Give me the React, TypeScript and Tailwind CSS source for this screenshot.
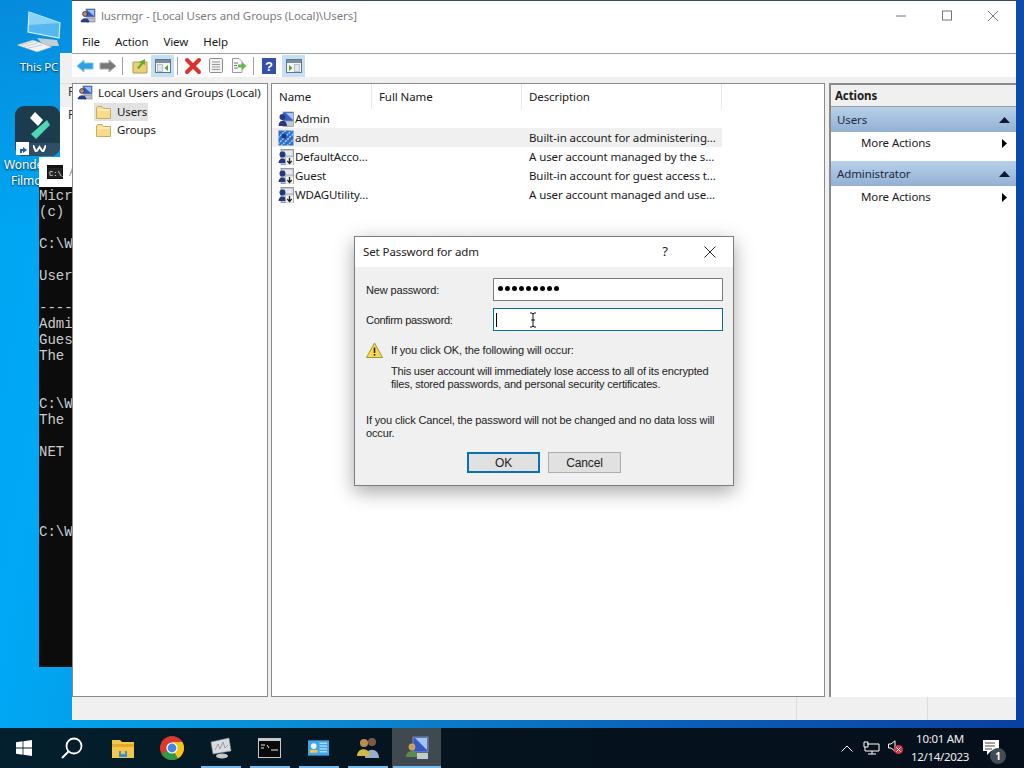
import React from "react";

const ui = "font-['Noto_Sans',sans-serif] tracking-[-0.1px]";
const dlg = "font-['Liberation_Sans',sans-serif]";

function FolderIcon() {
  return (
    <svg width="15" height="13" viewBox="0 0 15 13" className="shrink-0">
      <path d="M0.5 1.5 L0.5 12.5 L14.5 12.5 L14.5 2.5 L7.5 2.5 L6 0.5 L1.5 0.5 Z" fill="#f8dc8c" stroke="#c9ad62" strokeWidth="1" />
      <path d="M1.5 4 L13.5 4" stroke="#fdf0c4" strokeWidth="1.5" />
    </svg>
  );
}

function MmcIcon({ size = 16 }: { size?: number }) {
  return (
    <svg width={size} height={size} viewBox="0 0 16 16" className="shrink-0">
      <rect x="6" y="1" width="9" height="8" fill="#3558c4" stroke="#7f8a9c" strokeWidth="0.8" />
      <path d="M7 2 L14 2 L14 8 Z" fill="#9dc0ee" />
      <rect x="7" y="10" width="8" height="4" fill="#b9bec8" stroke="#717784" strokeWidth="0.6" />
      <circle cx="5" cy="6" r="2.4" fill="#c49058" stroke="#1e2b55" strokeWidth="0.8" />
      <path d="M1 14 C1 9.5 9 9.5 9 14 Z" fill="#1f3f9f" stroke="#1d2750" strokeWidth="0.6" />
    </svg>
  );
}

function UserIcon({ variant }: { variant: "admin" | "sel" | "down" }) {
  if (variant === "sel") {
    return (
      <svg width="16" height="16" viewBox="0 0 16 16" className="shrink-0">
        <rect x="0.5" y="0.5" width="15" height="15" fill="#2f6fc8" />
        <path d="M0 8 L8 0 M0 14 L14 0 M3 16 L16 3 M9 16 L16 9" stroke="#a9cdf0" strokeWidth="1.4" strokeDasharray="2 1" />
        <circle cx="6" cy="6" r="2.5" fill="#123a92" />
      </svg>
    );
  }
  if (variant === "admin") {
    return (
      <svg width="16" height="16" viewBox="0 0 16 16" className="shrink-0">
        <rect x="5" y="1" width="10.5" height="9" fill="#3a62cc" stroke="#8692a5" strokeWidth="0.7" />
        <path d="M8 2 L15 2 L15 9 Z" fill="#a9c8f0" />
        <rect x="5" y="10" width="10.5" height="5.5" fill="#c5c9d0" stroke="#7f8490" strokeWidth="0.6" />
        <circle cx="4.5" cy="6" r="3" fill="#253a78" />
        <path d="M0.5 15 C0.5 8 9 8 9 15 Z" fill="#23397f" />
      </svg>
    );
  }
  return (
    <svg width="16" height="16" viewBox="0 0 16 16" className="shrink-0">
      <rect x="3" y="0.5" width="12.5" height="15" fill="#c4c9d2" stroke="#767c88" strokeWidth="0.7" />
      <path d="M7 2 L14.5 2 L14.5 6 L7 6 Z" fill="#e6e8ec" />
      <circle cx="4.5" cy="5.5" r="3" fill="#24387c" />
      <path d="M0.5 14 C0.5 8 8.5 8 8.5 14 Z" fill="#24387c" />
      <rect x="7.5" y="8" width="8" height="8" fill="#f4f4f4" stroke="#9aa0aa" strokeWidth="0.5" />
      <path d="M11.5 9 L11.5 14 M9.3 12 L11.5 14.5 L13.7 12" stroke="#222" strokeWidth="1.3" fill="none" />
    </svg>
  );
}

function ToolBtn({ children, active }: { children: React.ReactNode; active?: boolean }) {
  return (
    <div className={`w-[23px] h-[22px] flex items-center justify-center shrink-0 ${active ? "bg-[#c5dff3]" : ""}`}>
      {children}
    </div>
  );
}

function Sep({ after = 3 }: { after?: number }) {
  return <div className={`w-px h-[18px] bg-[#a0a0a0] ml-[3px] shrink-0 ${after === 5 ? "mr-[5px]" : "mr-[3px]"}`} />;
}

function Toolbar() {
  return (
    <div className="h-[23px] bg-white flex items-center pl-[1px] border-t border-[#a0a0a0] box-content">
      <ToolBtn>
        <svg width="18" height="14" viewBox="0 0 18 14">
          <path d="M1 7 L8 1 L8 4 L17 4 L17 10 L8 10 L8 13 Z" fill="#2f9fe0" stroke="#7cc5ee" strokeWidth="1" />
        </svg>
      </ToolBtn>
      <ToolBtn>
        <svg width="18" height="14" viewBox="0 0 18 14">
          <path d="M17 7 L10 1 L10 4 L1 4 L1 10 L10 10 L10 13 Z" fill="#777" stroke="#aaa" strokeWidth="1" />
        </svg>
      </ToolBtn>
      <Sep after={5} />
      <ToolBtn>
        <svg width="16" height="16" viewBox="0 0 16 16">
          <path d="M1 4 L1 15 L15 15 L15 4 Z" fill="#e8cf7a" stroke="#b59a4a" />
          <path d="M5 10 L9 5 L7 4 L13 1 L13 7 L11 6 L7 11 Z" fill="#6aa82f" />
        </svg>
      </ToolBtn>
      <ToolBtn active>
        <svg width="16" height="14" viewBox="0 0 16 14">
          <rect x="0.5" y="0.5" width="15" height="13" fill="#f4f4f4" stroke="#64748b" />
          <rect x="1" y="1" width="14" height="3" fill="#7b8ba0" />
          <rect x="2.5" y="5.5" width="5" height="7" fill="#dfe6ec" stroke="#98a4b0" strokeWidth="0.6" />
          <path d="M13 6 L9.5 9 L13 12 Z" fill="#5e9a3c" />
        </svg>
      </ToolBtn>
      <Sep />
      <ToolBtn>
        <svg width="18" height="18" viewBox="0 0 18 18">
          <path d="M3 3 L15 15 M15 3 L3 15" stroke="#e0302c" strokeWidth="4" strokeLinecap="round" />
        </svg>
      </ToolBtn>
      <ToolBtn>
        <svg width="14" height="15" viewBox="0 0 14 15">
          <rect x="0.5" y="0.5" width="13" height="14" rx="1" fill="#f2f2f2" stroke="#8d8d8d" />
          <path d="M3 4 H11 M3 6.5 H11 M3 9 H11 M3 11.5 H11" stroke="#9a9a9a" />
        </svg>
      </ToolBtn>
      <ToolBtn>
        <svg width="16" height="15" viewBox="0 0 16 15">
          <path d="M1.5 0.5 H8 L11 3.5 V14.5 H1.5 Z" fill="#fafafa" stroke="#9a9a9a" />
          <path d="M3 5 H7 M3 7.5 H6 M3 10 H7" stroke="#777" />
          <path d="M7 6.5 H11 V4 L15.5 8 L11 12 V9.5 H7 Z" fill="#62b848" />
        </svg>
      </ToolBtn>
      <Sep />
      <ToolBtn>
        <svg width="14" height="16" viewBox="0 0 14 16">
          <rect width="14" height="16" fill="#3550ac" />
          <text x="7" y="13" textAnchor="middle" fontSize="13" fontWeight="700" fill="#fff" fontFamily="Liberation Sans">?</text>
        </svg>
      </ToolBtn>
      <div className="ml-[2px]">
        <ToolBtn active>
          <svg width="16" height="14" viewBox="0 0 16 14">
            <rect x="0.5" y="0.5" width="15" height="13" fill="#f4f4f4" stroke="#64748b" />
            <rect x="1" y="1" width="14" height="3" fill="#7b8ba0" />
            <rect x="8.5" y="5.5" width="5" height="7" fill="#dfe6ec" stroke="#98a4b0" strokeWidth="0.6" />
            <path d="M3 6 L6.5 9 L3 12 Z" fill="#5e9a3c" />
          </svg>
        </ToolBtn>
      </div>
    </div>
  );
}

function TreePane() {
  return (
    <div className={`w-[196px] shrink-0 bg-white border border-[#8a8a8a] text-[11.5px] leading-[18px] text-[#1a1a1a] ${ui}`}>
      <div className="flex items-center gap-[3px] pl-[4px] h-[18px] whitespace-nowrap">
        <MmcIcon />
        <span className="ml-[2px]">Local Users and Groups (Local)</span>
      </div>
      <div className="flex flex-col pl-[21px] mt-[1px]">
        <div className="flex items-center gap-[6px] w-[54px] h-[18px] bg-[#e2e2e2] pl-[2px]">
          <FolderIcon />
          <span>Users</span>
        </div>
        <div className="flex items-center gap-[6px] h-[18px] pl-[2px]">
          <FolderIcon />
          <span>Groups</span>
        </div>
      </div>
    </div>
  );
}

const users: { n: string; d: string; v: "admin" | "sel" | "down"; s?: boolean }[] = [
  { n: "Admin", d: "", v: "admin" },
  { n: "adm", d: "Built-in account for administering...", v: "sel", s: true },
  { n: "DefaultAcco...", d: "A user account managed by the s...", v: "down" },
  { n: "Guest", d: "Built-in account for guest access t...", v: "down" },
  { n: "WDAGUtility...", d: "A user account managed and use...", v: "down" },
];

function ListPane() {
  return (
    <div className={`flex-1 mr-[1px] bg-white border border-[#8a8a8a] text-[11.5px] text-[#1a1a1a] ${ui}`}>
      <div className="flex h-[25px] items-center">
        <div className="w-[100px] pl-[7px] h-full flex items-center border-r border-[#e8e8e8]">Name</div>
        <div className="w-[150px] pl-[7px] h-full flex items-center border-r border-[#e8e8e8]">Full Name</div>
        <div className="w-[200px] pl-[7px] h-full flex items-center border-r border-[#e8e8e8]">Description</div>
      </div>
      <div className="flex flex-col">
        {users.map((u) => (
          <div key={u.n} className={`flex items-center h-[19px] w-[450px] ${u.s ? "bg-[#f0f0f0]" : ""}`}>
            <div className="w-[251px] shrink-0 pl-[6px] flex items-center gap-[1px] whitespace-nowrap">
              <UserIcon variant={u.v} />
              <span>{u.n}</span>
            </div>
            <div className="pl-[6px] whitespace-nowrap">{u.d}</div>
          </div>
        ))}
      </div>
    </div>
  );
}

function ActionGroup({ title }: { title: string }) {
  return (
    <div>
      <div className="h-[25px] bg-[linear-gradient(#b7d1ea,#94b0d2)] flex items-center justify-between pl-[6px] pr-[6px] text-[#1c2a44]">
        <span>{title}</span>
        <svg width="11" height="6" viewBox="0 0 11 6">
          <path d="M0 6 L5.5 0 L11 6 Z" fill="#0b1b33" />
        </svg>
      </div>
      <div className="h-[29px] flex items-start pt-[2px] justify-between pl-[30px] pr-[9px] bg-white">
        <span>More Actions</span>
        <svg width="5" height="9" viewBox="0 0 5 9" className="mt-[5px]">
          <path d="M0 0 L5 4.5 L0 9 Z" fill="#000" />
        </svg>
      </div>
    </div>
  );
}

function ActionsPane() {
  return (
    <div className={`w-[187px] shrink-0 bg-white border-l-2 border-t-2 border-[#8a8a8a] text-[11.5px] text-[#1a1a1a] ${ui}`}>
      <div className="h-[22px] bg-[#f0f0f0] border-b border-[#9a9a9a] flex items-center pl-[4px] font-bold">Actions</div>
      <ActionGroup title="Users" />
      <ActionGroup title="Administrator" />
    </div>
  );
}

function Dialog() {
  return (
    <div className={`absolute left-[354px] top-[236px] w-[380px] h-[250px] border border-[#7d7d7d] bg-[#f0f0f0] shadow-[0_6px_18px_rgba(0,0,0,0.35)] flex flex-col text-[11px] tracking-[-0.15px] text-[#222] ${dlg}`}>
      <div className={`h-[30px] bg-white flex items-center pl-[8px] text-[11.5px] ${ui}`}>
        <span className="flex-1">Set Password for adm</span>
        <span className="w-[14px] text-center text-[13px] mr-[32px]">?</span>
        <svg width="12" height="12" viewBox="0 0 12 12" className="mr-[17px]">
          <path d="M0.5 0.5 L11.5 11.5 M11.5 0.5 L0.5 11.5" stroke="#222" strokeWidth="1" />
        </svg>
      </div>
      <div className="flex-1 flex flex-col pl-[11px] pr-[10px] pt-[11px]">
        <div className="flex items-center h-[23px]">
          <span className="w-[127px] pt-[2px]">New password:</span>
          <div className="w-[230px] h-[23px] bg-white border border-[#7a7a7a] flex items-center pl-[4px]">
            <span className="flex gap-[2px] -mt-[2px]">
              {[0, 1, 2, 3, 4, 5, 6, 7, 8].map((i) => (
                <span key={i} className="w-[5px] h-[5px] rounded-full bg-black" />
              ))}
            </span>
          </div>
        </div>
        <div className="flex items-center h-[23px] mt-[7px]">
          <span className="w-[127px] pt-[2px] tracking-[-0.3px]">Confirm password:</span>
          <div className="relative w-[230px] h-[23px] bg-white border border-[#0a6ba0] flex items-center pl-[2px]">
            <span className="w-px h-[14px] bg-black" />
            <svg width="8" height="16" viewBox="0 0 8 16" className="absolute left-[35px] top-[3px]">
              <path d="M1 1 H3 L4 2 L5 1 H7 M4 2 V14 M1 15 H3 L4 14 L5 15 H7 M2 8 H6" stroke="#111" strokeWidth="1" fill="none" />
            </svg>
          </div>
        </div>
        <div className="flex mt-[11px]">
          <svg width="17" height="16" viewBox="0 0 17 16" className="shrink-0 mr-[8px]">
            <path d="M8.5 1 L16.5 15.5 L0.5 15.5 Z" fill="#f7d94c" stroke="#a59340" strokeWidth="1" />
            <path d="M8.5 5.5 V11" stroke="#222" strokeWidth="1.6" />
            <rect x="7.7" y="12" width="1.6" height="1.6" fill="#222" />
          </svg>
          <div className="flex flex-col">
            <span className="h-[14px] leading-[14px] mt-[1px]">If you click OK, the following will occur:</span>
            <span className="mt-[8px] leading-[13px] w-[330px] tracking-[-0.2px]">
              This user account will immediately lose access to all of its encrypted files, stored passwords, and personal security certificates.
            </span>
          </div>
        </div>
        <div className="mt-[23px] leading-[13px] w-[355px]">
          If you click Cancel, the password will not be changed and no data loss will occur.
        </div>
        <div className="flex justify-center gap-[8px] mt-[12px] text-[12px] pr-[1px]">
          <div className="w-[73px] h-[21px] bg-[#e1e1e1] border-2 border-[#0a6fb5] flex items-center justify-center">OK</div>
          <div className="w-[73px] h-[21px] bg-[#e1e1e1] border border-[#adadad] flex items-center justify-center">Cancel</div>
        </div>
      </div>
    </div>
  );
}

function MainWindow() {
  return (
    <div className={`absolute left-[72px] top-0 w-[944px] h-[720px] bg-[#f0f0f0] flex flex-col border-t border-[#3a4a5a] ${ui}`}>
      <div className="h-[30px] bg-white flex items-center pl-[8px] text-[11.5px] text-[#7c7c7c] shrink-0">
        <MmcIcon />
        <span className="ml-[5px]">lusrmgr - [Local Users and Groups (Local)\Users]</span>
        <div className="ml-auto flex items-center">
          <svg width="46" height="12" viewBox="0 0 46 12"><path d="M18 6 H28" stroke="#777" /></svg>
          <svg width="46" height="12" viewBox="0 0 46 12"><rect x="18.5" y="1" width="9" height="9" fill="none" stroke="#777" /></svg>
          <svg width="46" height="12" viewBox="0 0 46 12"><path d="M18 1 L28 11 M28 1 L18 11" stroke="#777" /></svg>
        </div>
      </div>
      <div className="h-[22px] bg-white flex items-center gap-[15px] pl-[10px] text-[11.5px] text-[#1a1a1a] shrink-0">
        <span>File</span><span>Action</span><span>View</span><span>Help</span>
      </div>
      <Toolbar />
      <div className="flex-1 flex min-h-0 pt-[6px] gap-[3px]">
        <TreePane />
        <ListPane />
        <ActionsPane />
      </div>
      <div className="h-[23px] bg-[#f0f0f0] flex shrink-0">
        <div className="w-[725px] border-r border-[#dcdcdc]" />
        <div className="w-[131px] border-r border-[#dcdcdc]" />
      </div>
    </div>
  );
}

function Console() {
  const lines: [string, number][] = [
    ["Micr", 196], ["(c)", 212], ["C:\\W", 244], ["User", 276], ["----", 308], ["Admi", 324],
    ["Gues", 340], ["The", 356], ["C:\\W", 404], ["The", 420], ["NET", 452], ["C:\\W", 532],
  ];
  return (
    <>
      <div className="absolute left-[60px] top-[53px] w-[12px] h-[104px] bg-[#f0f0f0] text-[12px] text-[#333] overflow-hidden font-['Noto_Sans',sans-serif]">
        <div className="h-[31px] border-b border-[#ddd]" />
        <div className="pl-[8px] leading-[16px]">F</div>
        <div className="h-[7px]" />
        <div className="pl-[8px] leading-[16px] bg-white h-[60px]">P</div>
      </div>
      <div className="absolute left-[39px] top-[157px] w-[33px] h-[510px] bg-[#0c0c0c] overflow-hidden font-['Liberation_Mono',monospace] text-[14px] text-[#cccccc]">
        <div className="h-[30px] bg-white flex items-center pl-[8px] gap-[6px]">
          <svg width="16" height="14" viewBox="0 0 16 14" className="shrink-0">
            <rect width="16" height="14" fill="#111" />
            <rect x="1" y="3" width="14" height="10" fill="#222" />
            <text x="2" y="11" fontSize="7" fill="#fff" fontFamily="Liberation Mono">C:\_</text>
          </svg>
          <span className="text-[12px] text-[#999] font-['Noto_Sans',sans-serif]">A</span>
        </div>
        {lines.map(([t, y], i) => (
          <div key={i} className="absolute left-0 leading-[16px] whitespace-pre" style={{ top: y - 157 - 8 }}>{t}</div>
        ))}
      </div>
    </>
  );
}

function DesktopIcons() {
  return (
    <>
      <div className={`absolute left-[10px] top-[8px] w-[58px] flex flex-col items-center text-white text-[11.5px] [text-shadow:0_1px_2px_rgba(0,0,0,0.8)] ${ui}`}>
        <svg width="58" height="50" viewBox="0 0 58 50">
          <path d="M27 30 L47 32 L49 38 L34 38 Z" fill="#c4ccd4" />
          <path d="M19 4 L50 15 L49 30 L18 24 Z" fill="#55b8f0" stroke="#d6f0fc" strokeWidth="1.2" />
          <path d="M19 4 L50 15 L19 17 Z" fill="#8ad3f8" />
          <path d="M7 37 L23 32 L42 39 L27 44 Z" fill="#f0f4f7" stroke="#9aa7b0" strokeWidth="0.5" />
          <path d="M11 37 L24 33.5 M14 38.5 L28 35 M18 40 L32 37" stroke="#aab6bf" strokeWidth="0.6" />
        </svg>
        <span className="whitespace-nowrap">This PC</span>
      </div>
      <div className="absolute left-[15px] top-[106px] w-[45px] h-[50px] rounded-[9px] bg-[#1c3b4c] overflow-hidden flex items-start justify-center pt-[4px]">
        <svg width="26" height="32" viewBox="0 0 26 32">
          <path d="M10 2 L18 10 L13 16 L5 8 Z" fill="#ffffff" />
          <path d="M22 10 L25 15 L11 29 L6 24 Z" fill="#4fd6b4" />
        </svg>
        <div className="absolute left-0 bottom-0 w-full h-[13px] bg-[#2f4f66]" />
      </div>
      <div className="absolute left-[16px] top-[142px] w-[13px] h-[13px] bg-white flex items-center justify-center">
        <svg width="10" height="10" viewBox="0 0 10 10"><path d="M2 9 V5 H5 V3 L9 6 L5 9 V7 H4 V9 Z" fill="#1a5fb4" /></svg>
      </div>
      <svg width="13" height="7" viewBox="0 0 13 7" className="absolute left-[33px] top-[145px]">
        <path d="M0 0 L3 7 L6.5 2 L10 7 L13 0" stroke="#fff" strokeWidth="2" fill="none" />
      </svg>
      <div className={`absolute left-[4px] top-[157px] text-white text-[12px] leading-[16px] [text-shadow:0_1px_2px_rgba(0,0,0,0.8)] ${ui}`}>
        <div>Wonde</div>
        <div className="pl-[7px]">Filmo</div>
      </div>
    </>
  );
}

function TaskCell({ children, active }: { children: React.ReactNode; active?: boolean }) {
  return (
    <div className={`w-[49px] h-[40px] flex justify-center items-center ${active ? "bg-[#3e4a50]" : ""}`}>{children}</div>
  );
}

function Taskbar() {
  return (
    <div className={`absolute left-0 top-[728px] w-[1024px] h-[40px] bg-[linear-gradient(90deg,#04202e,#05141e_40%,#050f1c)] flex items-center text-white ${ui}`}>
      <div className="w-[48px] flex justify-center">
        <svg width="16" height="16" viewBox="0 0 16 16">
          <path d="M0 2.2 L6.6 1.3 V7.6 H0 Z M7.4 1.2 L16 0 V7.6 H7.4 Z M0 8.4 H6.6 V14.7 L0 13.8 Z M7.4 8.4 H16 V16 L7.4 14.8 Z" fill="#fff" />
        </svg>
      </div>
      <div className="w-[48px] flex justify-center">
        <svg width="22" height="22" viewBox="0 0 22 22">
          <circle cx="13" cy="9" r="7.5" fill="none" stroke="#fff" strokeWidth="1.8" />
          <path d="M7.5 14.5 L1 21" stroke="#fff" strokeWidth="2" />
        </svg>
      </div>
      <div className="flex ml-[2px]">
        <TaskCell>
          <svg width="22" height="19" viewBox="0 0 22 19">
            <path d="M0 1 H8 L10 3 H22 V19 H0 Z" fill="#f3c64c" />
            <rect x="0" y="5" width="22" height="3" fill="#e7a928" />
            <rect x="7" y="12" width="8" height="6" fill="#3f8fd0" />
            <rect x="9" y="12" width="4" height="3" fill="#f3c64c" />
          </svg>
        </TaskCell>
        <TaskCell>
          <svg width="24" height="24" viewBox="0 0 24 24">
            <circle cx="12" cy="12" r="12" fill="#d93a2f" />
            <path d="M12 12 L1.6 18 A12 12 0 0 0 18 22.4 Z" fill="#2f9a44" />
            <path d="M12 12 L18 22.4 A12 12 0 0 0 22.4 6 L12 6 Z" fill="#f5c518" />
            <circle cx="12" cy="12" r="5.6" fill="#fff" />
            <circle cx="12" cy="12" r="4.4" fill="#4286e8" />
          </svg>
        </TaskCell>
        <TaskCell>
          <svg width="24" height="22" viewBox="0 0 24 22">
            <path d="M2 5 L20 1 L22 14 L4 17 Z" fill="#d8dbdf" stroke="#8a9096" strokeWidth="0.6" />
            <path d="M6 13 L9 7 L11 12 L14 5 L16 11 L19 8" stroke="#8a9096" fill="none" strokeWidth="0.8" />
            <ellipse cx="13" cy="19" rx="6" ry="2.5" fill="#c5c9cd" />
          </svg>
        </TaskCell>
        <TaskCell>
          <svg width="23" height="20" viewBox="0 0 23 20">
            <rect x="0.5" y="0.5" width="22" height="19" fill="#0a0a0a" stroke="#c8c8c8" />
            <rect x="1" y="1" width="21" height="2" fill="#c8c8c8" />
            <path d="M3 7 H7 M3 10 H6 M9 7 L11 10 M13 12 H20" stroke="#e8e8e8" />
          </svg>
        </TaskCell>
        <TaskCell>
          <svg width="21" height="16" viewBox="0 0 22 16">
            <rect width="22" height="16" fill="#3fa6e8" />
            <circle cx="6" cy="6" r="3" fill="#f4f4f4" />
            <rect x="2" y="10" width="8" height="3" fill="#f3c64c" />
            <path d="M12 3 H20 M12 6 H20 M12 9 H20 M12 12 H20" stroke="#e6f2fb" />
          </svg>
        </TaskCell>
        <TaskCell>
          <svg width="24" height="24" viewBox="0 0 24 24">
            <circle cx="16" cy="6" r="4" fill="#7a5a44" />
            <path d="M9 22 C9 11 23 11 23 22 Z" fill="#94aed0" />
            <circle cx="8" cy="7" r="4" fill="#b98c52" />
            <path d="M1 20 C1 11 14 11 14 20 Z" fill="#d6b848" />
          </svg>
        </TaskCell>
        <TaskCell active>
          <svg width="24" height="24" viewBox="0 0 24 24">
            <rect x="8" y="1" width="15" height="15" fill="#3558c4" stroke="#a0a8b6" strokeWidth="0.7" />
            <path d="M10 2 L22 2 L22 14 Z" fill="#a4c4f0" />
            <circle cx="7" cy="11" r="3.4" fill="#caa05c" />
            <path d="M1 21 C1 13 13 13 13 21 Z" fill="#5c8c4c" />
            <rect x="12" y="17" width="11" height="6" fill="#c5c9d0" />
          </svg>
        </TaskCell>
      </div>
      <div className="ml-auto flex items-center h-full">
        <svg width="12" height="7" viewBox="0 0 12 7" className="mr-[10px]">
          <path d="M0.5 6.5 L6 1 L11.5 6.5" stroke="#fff" fill="none" />
        </svg>
        <svg width="17" height="14" viewBox="0 0 17 14" className="mr-[8px]">
          <path d="M4 3 H16 V10 H2 V6 M9 10 V13 M5 13 H13 M1 1 H5 V6 H1 Z" stroke="#fff" fill="none" />
        </svg>
        <div className="relative w-[16px] h-[16px] mr-[3px]">
          <svg width="8" height="12" viewBox="0 0 8 12" className="absolute left-0 top-0">
            <path d="M0.5 4 H3 L7 0.8 V11.2 L3 8 H0.5 Z" stroke="#fff" fill="none" />
          </svg>
          <div className="absolute left-[6px] top-[5px] w-[9px] h-[9px] rounded-full bg-[#d8384a] flex items-center justify-center">
            <svg width="5" height="5" viewBox="0 0 5 5"><path d="M0.5 0.5 L4.5 4.5 M4.5 0.5 L0.5 4.5" stroke="#fff" /></svg>
          </div>
        </div>
        <div className="w-[66px] mr-[5px] flex flex-col items-center text-[11.5px] tracking-[-0.3px] leading-[18px] text-[#f0f0f0] whitespace-nowrap">
          <span>10:01 AM</span>
          <span>12/14/2023</span>
        </div>
        <div className="relative w-[46px] h-full">
          <svg width="16" height="15" viewBox="0 0 16 15" className="absolute left-[5px] top-[12px]">
            <path d="M0 0 H16 V11 H8 L4 15 V11 H0 Z" fill="#fff" />
            <path d="M2 3 H12 M2 6 H12 M2 9 H9" stroke="#444" />
          </svg>
          <div className="absolute left-[12px] top-[20px] w-[16px] h-[16px] rounded-full bg-[#444c52] flex items-center justify-center text-[10px] font-bold text-white leading-none">1</div>
        </div>
      </div>
      <div className="absolute left-[201px] bottom-0 w-[40px] h-[2px] bg-[#76b9ed]" />
      <div className="absolute left-[250px] bottom-0 w-[40px] h-[2px] bg-[#76b9ed]" />
      <div className="absolute left-[299px] bottom-0 w-[40px] h-[2px] bg-[#76b9ed]" />
      <div className="absolute left-[348px] bottom-0 w-[40px] h-[2px] bg-[#76b9ed]" />
      <div className="absolute left-[393px] bottom-0 w-[48px] h-[2px] bg-[#76b9ed]" />
    </div>
  );
}

export default function App() {
  return (
    <div className="relative w-[1024px] h-[768px] overflow-hidden bg-[linear-gradient(180deg,rgba(20,80,170,0.3),transparent_30%),linear-gradient(100deg,#00a4f0_0%,#00a8f5_10%,#0a8fd5_35%,#0a5fb8_70%,#0a3fa0_100%)]">
      <DesktopIcons />
      <Console />
      <MainWindow />
      <Dialog />
      <Taskbar />
    </div>
  );
}
